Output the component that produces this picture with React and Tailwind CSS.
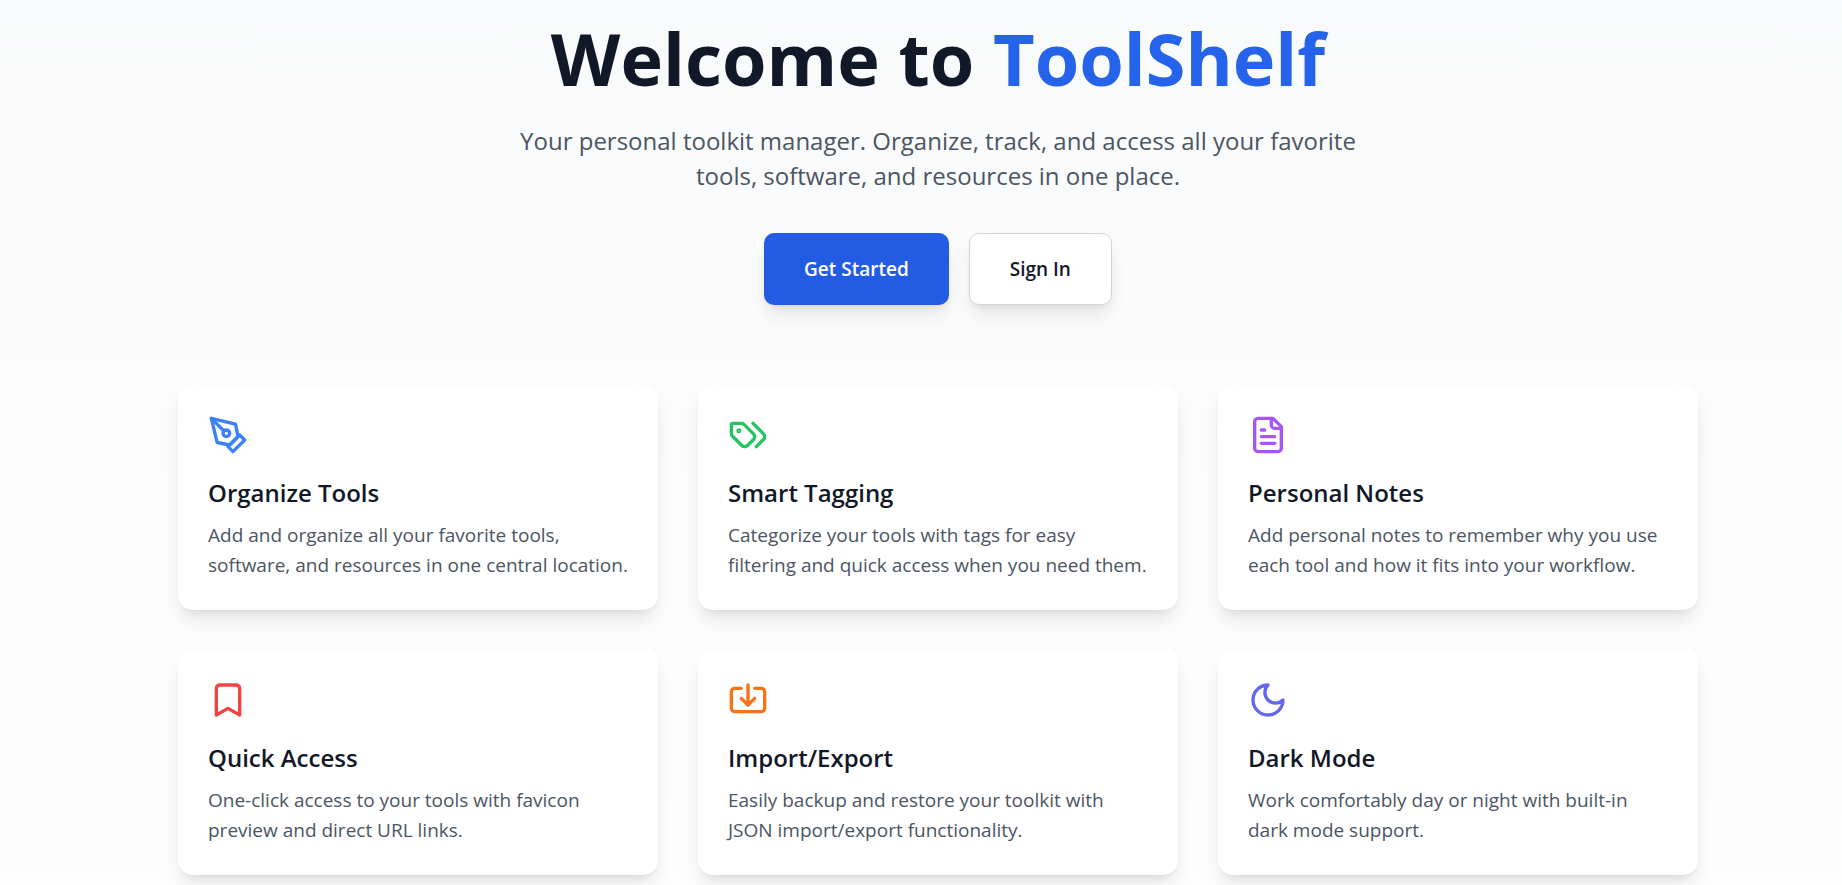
import React from 'react';

// Shared wrapper so every icon gets the same size and stroke
const Icon = ({ className, children }) => (
    <svg
        viewBox="0 0 24 24"
        fill="none"
        stroke="currentColor"
        strokeWidth="2"
        strokeLinecap="round"
        strokeLinejoin="round"
        aria-hidden="true"
        className={`mb-5 h-10 w-10 ${className}`}
    >
        {children}
    </svg>
);

const features = [
    {
        title: 'Organize Tools',
        text: 'Add and organize all your favorite tools, software, and resources in one central location.',
        color: 'text-[#3b82f6]',
        icon: (
            <>
                <path d="m12 19 7-7 3 3-7 7-3-3z" />
                <path d="m18 13-1.5-7.5L2 2l3.5 14.5L13 18l5-5z" />
                <path d="m2 2 7.586 7.586" />
                <circle cx="11" cy="11" r="2" />
            </>
        ),
    },
    {
        title: 'Smart Tagging',
        text: 'Categorize your tools with tags for easy filtering and quick access when you need them.',
        color: 'text-[#22c55e]',
        icon: (
            <>
                <path d="m15 5 6.3 6.3a2.4 2.4 0 0 1 0 3.4L17 19" />
                <path d="M9.586 5.586A2 2 0 0 0 8.172 5H3a1 1 0 0 0-1 1v5.172a2 2 0 0 0 .586 1.414L8.29 18.29a2.426 2.426 0 0 0 3.42 0l3.58-3.58a2.426 2.426 0 0 0 0-3.42z" />
                <circle cx="6.5" cy="9.5" r=".5" fill="currentColor" />
            </>
        ),
    },
    {
        title: 'Personal Notes',
        text: 'Add personal notes to remember why you use each tool and how it fits into your workflow.',
        color: 'text-[#a855f7]',
        icon: (
            <>
                <path d="M15 2H6a2 2 0 0 0-2 2v16a2 2 0 0 0 2 2h12a2 2 0 0 0 2-2V7Z" />
                <path d="M14 2v4a2 2 0 0 0 2 2h4" />
                <path d="M10 9H8" />
                <path d="M16 13H8" />
                <path d="M16 17H8" />
            </>
        ),
    },
    {
        title: 'Quick Access',
        text: 'One-click access to your tools with favicon preview and direct URL links.',
        color: 'text-[#ef4444]',
        icon: <path d="m19 21-7-4-7 4V5a2 2 0 0 1 2-2h10a2 2 0 0 1 2 2v16z" />,
    },
    {
        title: 'Import/Export',
        text: 'Easily backup and restore your toolkit with JSON import/export functionality.',
        color: 'text-[#f97316]',
        icon: (
            <>
                <path d="M12 3v12" />
                <path d="m8 11 4 4 4-4" />
                <path d="M8 5H4a2 2 0 0 0-2 2v10a2 2 0 0 0 2 2h16a2 2 0 0 0 2-2V7a2 2 0 0 0-2-2h-4" />
            </>
        ),
    },
    {
        title: 'Dark Mode',
        text: 'Work comfortably day or night with built-in dark mode support.',
        color: 'text-[#6366f1]',
        icon: <path d="M12 3a6 6 0 0 0 9 9 9 9 0 1 1-9-9Z" />,
    },
];

const FeatureCard = ({ title, text, color, icon }) => (
    <div className="rounded-[15px] bg-white p-[30px] shadow-[0_12px_19px_-4px_rgba(0,0,0,0.1),0_5px_8px_-5px_rgba(0,0,0,0.1)]">
        <Icon className={color}>{icon}</Icon>
        <h3 className="mb-2.5 text-[24px] leading-[35px] font-semibold text-[#111827]">{title}</h3>
        <p className="text-[19px] leading-[30px] text-[#4b5563]">{text}</p>
    </div>
);

const App = () => {
    return (
        <div className="min-h-screen bg-linear-to-b from-[#f9fafb] to-[#fdfdfd] pl-[34px] font-['Open_Sans','Noto_Sans',sans-serif]">
            <main className="mx-auto max-w-[1600px] px-10 pt-[18px] pb-2">
                {/* Hero */}
                <div className="text-center">
                    <h1 className="mb-[25px] text-[72px] leading-[80px] font-bold text-[#111827]">
                        Welcome to <span className="text-[#2563eb]">ToolShelf</span>
                    </h1>
                    <p className="mx-auto mb-10 max-w-[840px] text-[24px] leading-[35px] text-[#4b5563]">
                        Your personal toolkit manager. Organize, track, and access all your favorite tools, software, and
                        resources in one place.
                    </p>
                    <div className="flex justify-center gap-5">
                        <button
                            type="button"
                            className="h-[72px] rounded-[10px] bg-[#235ce3] px-10 text-[19px] font-semibold text-white shadow-[0_12px_19px_-4px_rgba(0,0,0,0.1),0_5px_8px_-5px_rgba(0,0,0,0.1)] hover:bg-blue-700"
                        >
                            Get Started
                        </button>
                        <button
                            type="button"
                            className="h-[72px] rounded-[10px] border border-[#d1d5db] bg-white px-10 text-[19px] font-semibold text-[#111827] shadow-[0_12px_19px_-4px_rgba(0,0,0,0.1),0_5px_8px_-5px_rgba(0,0,0,0.1)] hover:bg-gray-50"
                        >
                            Sign In
                        </button>
                    </div>
                </div>

                {/* Features */}
                <div className="mt-20 grid grid-cols-1 gap-10 md:grid-cols-2 lg:grid-cols-3">
                    {features.map((feature) => (
                        <FeatureCard key={feature.title} {...feature} />
                    ))}
                </div>
            </main>
        </div>
    );
};

export default App;
